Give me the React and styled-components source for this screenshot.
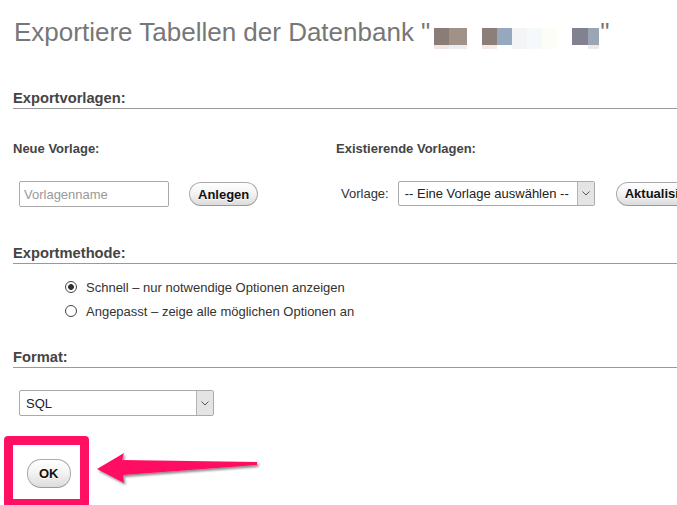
import React from "react"
import styled, { createGlobalStyle } from "styled-components"

const GlobalStyle = createGlobalStyle`
html, body {
  margin: 0;
  padding: 0;
  background: #fff;
  overflow: hidden;
}
body {
  font-family: "Liberation Sans", Arial, sans-serif;
  font-size: 13px;
  color: #333;
}
`

const Page = styled.div`
position: relative;
width: 820px;
padding: 17px 0 0 13px;
box-sizing: border-box;
`

const Title = styled.h1`
margin: 0 0 40px 1px;
font-weight: normal;
font-size: 26px;
line-height: 30px;
color: #777;
white-space: nowrap;
`

const Blur = styled.span`
display: inline-flex;
vertical-align: -8px;
margin: 0 1px 0 4px;
`

const Cell = styled.span`
display: inline-block;
width: ${p => p.w || 15}px;
height: 17px;
background: ${p => p.c};
border-bottom: 4px solid ${p => p.b || p.c};
`

const SectionHead = styled.h2`
margin: 0;
font-size: 14.7px;
line-height: 18px;
font-weight: bold;
color: #444;
padding-bottom: 1px;
border-bottom: 1px solid #999;
`

const Columns = styled.div`
display: flex;
margin-top: 32px;
`

const Column = styled.div`
width: ${p => p.w}px;
flex: none;
`

const SubHead = styled.h3`
margin: 0 0 24px 0;
font-size: 13px;
line-height: 16px;
font-weight: bold;
color: #444;
`

const Row = styled.div`
display: flex;
align-items: center;
gap: ${p => p.gap || 20}px;
padding-left: ${p => p.indent || 0}px;
margin-top: ${p => p.top || 0}px;
`

const TextInput = styled.input`
width: 150px;
height: 26px;
box-sizing: border-box;
border: 1px solid #aaa;
border-radius: 2px;
padding: 0 4px;
font-family: "Liberation Sans", Arial, sans-serif;
font-size: 13px;
color: #333;
&::placeholder {
  color: #999;
}
`

const Button = styled.button`
height: ${p => p.h || 24}px;
padding: 0 ${p => p.px || 8}px;
margin-left: ${p => p.ml || 0}px;
border: 1px solid #aaa;
border-bottom-color: #999;
border-radius: 14px;
background: linear-gradient(#ffffff 0%, #f4f4f4 45%, #dcdcdc 100%);
box-shadow: inset 0 1px 0 #fff;
font-family: "Liberation Sans", Arial, sans-serif;
font-size: 13px;
font-weight: bold;
color: #111;
text-shadow: 0 1px 0 #fff;
white-space: nowrap;
cursor: pointer;
`

const Label = styled.span`
font-size: 13px;
color: #333;
`

const SelectBox = styled.div`
display: inline-flex;
width: ${p => p.w}px;
height: ${p => p.h || 25}px;
box-sizing: border-box;
border: 1px solid #aaa;
border-radius: 2px;
background: #fff;
overflow: hidden;
`

const Select = styled.select`
flex: 1;
min-width: 0;
appearance: none;
border: none;
outline: none;
background: transparent;
padding: 0 6px;
font-family: "Liberation Sans", Arial, sans-serif;
font-size: 13px;
color: #222;
`

const ArrowBox = styled.span`
flex: none;
width: 16px;
display: flex;
align-items: center;
justify-content: center;
background: #e4e4e4;
border-left: 1px solid #b4b4b4;
`

const Methods = styled.div`
margin: 11px 0 0 52px;
`

const MethodRow = styled.label`
display: flex;
align-items: center;
gap: 9px;
height: 24px;
font-size: 13px;
color: #333;
`

const Radio = styled.input`
appearance: none;
margin: 0;
width: 12px;
height: 12px;
border: 1px solid #444;
border-radius: 50%;
background: #fff;
&:checked {
  background: radial-gradient(circle, #333 0 2.6px, #fff 3.2px);
}
`

const Block = styled.div`
margin-top: ${p => p.top}px;
`

const Highlight = styled.div`
display: inline-block;
margin-left: -9px;
padding: 14px 9px 11px 14px;
border: 9px solid #ff1062;
border-radius: 4px;
`

const Arrow = styled.svg`
position: absolute;
left: 0;
top: 0;
pointer-events: none;
`

const Chevron = () => (
  <svg width="8" height="5" viewBox="0 0 8 5">
    <path d="M0.5 0.5 L4 4 L7.5 0.5" fill="none" stroke="#555" strokeWidth="1" />
  </svg>
)

const Dropdown = ({ w, h, children }) => (
  <SelectBox w={w} h={h}>
    <Select>{children}</Select>
    <ArrowBox><Chevron /></ArrowBox>
  </SelectBox>
)

export default function App() {
  return (
    <>
      <GlobalStyle />
      <Page>
        <Title>
          Exportiere Tabellen der Datenbank "
          <Blur>
            <Cell c="#8a7d77" b="#efe6e3" />
            <Cell c="#a09189" b="#e8eef3" w={18} />
            <Cell c="#fff" />
            <Cell c="#8c7e79" b="#f3ebe8" />
            <Cell c="#95a8bd" b="#fff" />
            <Cell c="#f2f4f6" />
            <Cell c="#f6f9fc" />
            <Cell c="#fdfdf7" />
            <Cell c="#fff" />
            <Cell c="#818190" b="#fff" w={16} />
            <Cell c="#9aa6b6" b="#f0e8e6" w={11} />
          </Blur>
          "
        </Title>

        <SectionHead>Exportvorlagen:</SectionHead>
        <Columns>
          <Column w={323}>
            <SubHead>Neue Vorlage:</SubHead>
            <Row indent={6} gap={20}>
              <TextInput placeholder="Vorlagenname" />
              <Button>Anlegen</Button>
            </Row>
          </Column>
          <Column w={460}>
            <SubHead>Existierende Vorlagen:</SubHead>
            <Row indent={5} gap={9}>
              <Label>Vorlage:</Label>
              <Dropdown w={197}>
                <option>-- Eine Vorlage auswählen --</option>
              </Dropdown>
              <Button ml={12}>Aktualisieren</Button>
            </Row>
          </Column>
        </Columns>

        <Block top={37}>
          <SectionHead>Exportmethode:</SectionHead>
          <Methods>
            <MethodRow>
              <Radio type="radio" name="method" defaultChecked />
              Schnell – nur notwendige Optionen anzeigen
            </MethodRow>
            <MethodRow>
              <Radio type="radio" name="method" />
              Angepasst – zeige alle möglichen Optionen an
            </MethodRow>
          </Methods>
        </Block>

        <Block top={25}>
          <SectionHead>Format:</SectionHead>
          <Row indent={6} top={22}>
            <Dropdown w={195} h={26}>
              <option>SQL</option>
            </Dropdown>
          </Row>
        </Block>

        <Block top={20}>
          <Highlight>
            <Button h={29} px={11}>OK</Button>
          </Highlight>
        </Block>

        <Arrow width="300" height="505" viewBox="0 0 300 505">
          <defs>
            <filter id="shadow" x="-10%" y="-30%" width="130%" height="180%">
              <feDropShadow dx="1.5" dy="2" stdDeviation="1.2" floodColor="#000" floodOpacity="0.45" />
            </filter>
          </defs>
          <polygon
            points="97,469 124,453 122,460 257,462 257,465 123,475 124,483"
            fill="#ff1062"
            filter="url(#shadow)"
          />
        </Arrow>
      </Page>
    </>
  )
}
